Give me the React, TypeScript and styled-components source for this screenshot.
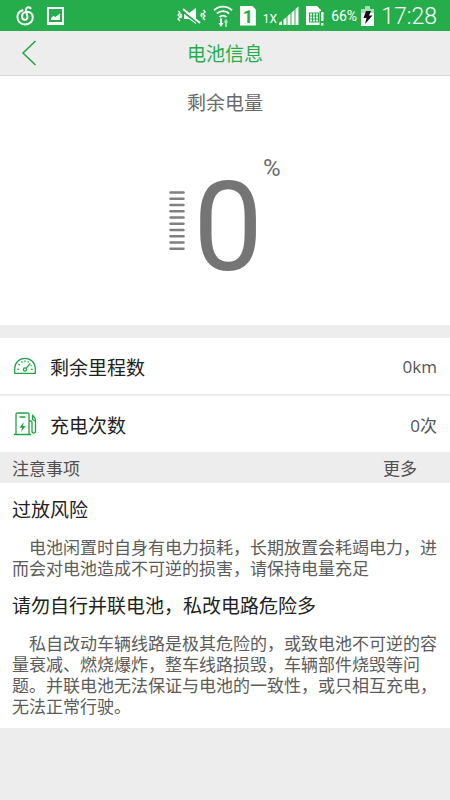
import React from "react";
import styled, { createGlobalStyle } from "styled-components";

const GREEN = "#25ad4b";
const CANVAS = "#ededed";

const GlobalStyle = createGlobalStyle`
  * { box-sizing: border-box; }
  body {
    margin: 0;
    background: ${CANVAS};
    color: #222;
    font-family: Roboto, "Noto Sans CJK SC", sans-serif;
  }
  h1, h2, h3, p, dl, dd { margin: 0; font-weight: 400; }
`;

const Page = styled.div`
  display: flex;
  flex-direction: column;
`;

const StatusBar = styled.div`
  display: flex;
  align-items: center;
  justify-content: space-between;
  height: 31px;
  padding: 0 13px 0 16px;
  background: ${GREEN};
  color: #fff;
`;

const StatusGroup = styled.div<{ $gap: number }>`
  display: flex;
  align-items: center;
  gap: ${(p) => p.$gap}px;
`;

const Icon = styled.svg`
  display: block;
  flex: none;
`;

const SimBadge = styled.span`
  width: 16px;
  height: 20px;
  background: #fff;
  clip-path: polygon(0 0, 75% 0, 100% 20%, 100% 100%, 0 100%);
  color: ${GREEN};
  font-size: 18px;
  font-weight: 700;
  line-height: 21px;
  text-align: center;
`;

const SmallText = styled.span<{ $size: number }>`
  font-size: ${(p) => p.$size}px;
  line-height: ${(p) => (p.$size < 14 ? 12 : 20)}px;
  align-self: ${(p) => (p.$size < 14 ? "flex-end" : "center")};
`;

const Clock = styled.time`
  font-size: 23px;
  font-weight: 300;
  line-height: 31px;
  padding-top: 2px;
`;

const NavBar = styled.header`
  display: grid;
  grid-template-columns: 58px 1fr 58px;
  align-items: center;
  height: 45px;
  border-bottom: 1px solid #d6d6d6;
`;

const BackButton = styled.button`
  display: flex;
  align-items: center;
  height: 44px;
  padding: 0 21px;
  border: 0;
  background: none;
`;

const Title = styled.h1`
  padding-top: 4px;
  color: ${GREEN};
  font-size: 19px;
  line-height: 28px;
  text-align: center;
`;

const ChargePanel = styled.section`
  display: flex;
  flex-direction: column;
  align-items: center;
  gap: 38px;
  padding: 14px 0 40px;
  background: #fff;
  color: #6a6a6a;
`;

const ChargeTitle = styled.h2`
  font-size: 19px;
  line-height: 28px;
`;

const Gauge = styled.div`
  display: flex;
  align-items: center;
  height: 129px;
`;

const Digit = styled.span`
  padding-top: 14px;
  margin-left: 8px;
  color: #757575;
  font-size: 124px;
  line-height: 129px;
`;

const Percent = styled.span`
  align-self: flex-start;
  font-size: 24px;
  line-height: 24px;
`;

const Stats = styled.dl`
  display: grid;
  gap: 2px;
  margin-top: 13px;
`;

const StatRow = styled.div`
  display: flex;
  align-items: center;
  height: 56px;
  padding: 0 13px;
  background: #fff;
`;

const StatLabel = styled.dt`
  display: flex;
  flex: 1;
  align-items: center;
  gap: 13px;
  font-size: 19px;
`;

const StatValue = styled.dd`
  color: #555;
  font-family: "Open Sans", "Noto Sans CJK SC", sans-serif;
  font-size: 17px;
`;

const NoticeHeader = styled.div`
  display: flex;
  align-items: center;
  justify-content: space-between;
  height: 31px;
  padding: 0 33px 0 12px;
  color: #505050;
`;

const NoticeTitle = styled.h2`
  font-size: 17px;
`;

const MoreLink = styled.a`
  color: inherit;
  font-size: 17px;
  text-decoration: none;
`;

const Notices = styled.section`
  display: grid;
  gap: 13px;
  padding: 14px 12px 10px;
  background: #fff;
`;

const Notice = styled.article`
  display: grid;
  gap: 13px;
`;

const NoticeName = styled.h3`
  font-size: 19px;
  line-height: 28px;
`;

const NoticeText = styled.p`
  color: #5c5c5c;
  font-size: 17px;
  line-height: 21px;
  text-indent: 17px;
  white-space: nowrap;
`;

const MusicIcon = () => (
  <Icon width="19" height="20" viewBox="0 0 19 20" fill="none" stroke="#fff" strokeWidth="2" strokeLinecap="round">
    <path d="M6.5 4.2C3.3 5.2 1.4 7.8 1.4 11c0 4.300 3.400 7.600 7.600 7.600s7.800-3 7.800-7.200c0-3.600-2.600-5.700-5.700-5.700-3 0-5.100 1.900-5.100 4.600 0 2.200 1.300 3.500 2.900 3.500s2.900-1.300 2.500-3.100L10 4.200C9.700 2.300 11.300 1 12.800 1.200c.8.100 1.400.5 1.700.9" />
  </Icon>
);

const GalleryIcon = () => (
  <Icon width="17" height="18" viewBox="0 0 17 18">
    <path fill="none" stroke="#fff" strokeWidth="2" d="M1 1h15v16H1z" />
    <path fill="#fff" d="M4 13v-2l2.500-2 2 1L13 6.500V13zM1 15h15v2H1z" />
  </Icon>
);

const MuteIcon = () => (
  <Icon width="29" height="18" viewBox="0 0 29 18">
    <path fill="#fff" d="M7 6h5l7-5v16l-7-5H7z" />
    <path stroke={GREEN} strokeWidth="2" d="M5 4l17 13" />
    <path stroke="#fff" strokeWidth="2" d="M6 2l17 14" />
    <path fill="none" stroke="#fff" strokeWidth="1.300" d="M1.500 4l1.500 2-2 2 2 2-2 2 2 2M26.500 3l1.500 2-2 2 2 2-2 2 2 2M4.500 7l-1 1 1 1-1 1 1 1M24 6l1 1-1 1 1 1-1 1" />
  </Icon>
);

const WifiIcon = () => (
  <Icon width="20" height="22" viewBox="0 0 20 22">
    <g fill="none" stroke="#fff" strokeWidth="1.900">
      <path d="M1 5.200a13 13 0 0 1 18 0M3.800 8.600a9 9 0 0 1 12.400 0M6.600 12a5 5 0 0 1 6.800 0" />
    </g>
    <path fill="#fff" d="M7 13.500h2V18h1.500L8 22l-2.500-4H7z" />
    <path fill="#a5dfb5" d="M12 22h2v-4.500h1.500l-2.500-4-2.500 4H12z" />
  </Icon>
);

const SignalIcon = () => (
  <Icon width="20" height="19" viewBox="0 0 20 19" fill="#fff">
    <path d="M0 19v-2l3-2v4zM4.500 19v-5.500l3-2.500v8zM8.500 19V10l3-2.500V19zM12.500 19V6.500l3-2.500v15zM16.500 19V3l3-2.500V19z" />
  </Icon>
);

const SimAlertIcon = () => (
  <Icon width="18" height="20" viewBox="0 0 18 20">
    <path fill="#fff" d="M0 0h11l4 4v15H0z" />
    <path fill="none" stroke={GREEN} strokeWidth="1.200" d="M3.500 7h9v9h-9zM3.500 10h9M3.500 13h9M6.500 7v9M9.500 7v9" />
    <path fill={GREEN} d="M13.500 5H18v15h-4.500z" />
    <path fill="#fff" d="M15 6h2.500v9H15zM15 17h2.500v2.500H15z" />
  </Icon>
);

const BatteryIcon = () => (
  <Icon width="13" height="20" viewBox="0 0 13 20">
    <path fill="#a5dfb5" d="M4 0h5v3h4v5H0V3h4z" />
    <path fill="#fff" d="M0 7h13v13H0z" />
    <path fill="#111" d="M5 5h5L8 9.500h3.500L4 18l1.500-6H2.500z" />
  </Icon>
);

const BackIcon = () => (
  <Icon width="16" height="26" viewBox="0 0 16 26" fill="none" stroke="#22a33f" strokeWidth="1.500">
    <path d="M14.500 1L2 13l12.500 12" />
  </Icon>
);

const LevelBars = () => (
  <Icon width="16" height="60" viewBox="0 0 16 60" stroke="#808080" strokeWidth="2.500" strokeLinecap="round">
    {Array.from({ length: 10 }, (_, i) => (
      <path key={i} d={`M1.500 ${1.5 + i * 6.25}h13`} />
    ))}
  </Icon>
);

const MileageIcon = () => (
  <Icon width="24" height="24" viewBox="0 0 24 24" fill="none" stroke="#20a545" strokeWidth="1.300">
    <path d="M1.700 19.300v-4.600C1.700 8.700 6.300 4.300 12 4.300s10.300 4.400 10.300 10.400v4.600z" strokeLinejoin="round" />
    <circle cx="12" cy="15.500" r="1.600" />
    <path d="M13.200 14.200l4-4.700M4.300 15.300h2M17.800 15.300h2M5.500 10.300l1.500 1M8.500 7.300l.8 1.500M12 6.500v1.800M15.500 7.300l-.6 1.300M18.600 11.300l-.9.400" />
  </Icon>
);

const ChargeIcon = () => (
  <Icon width="24" height="24" viewBox="0 0 24 24" fill="none" stroke="#20a545" strokeWidth="1.300">
    <path d="M3 22V2.500C3 1.500 3.500 1 4.500 1h10c1 0 1.500.5 1.500 1.500V22M1 22.500h17M6.500 5h6M16 9h1.500c1 0 1.500.5 1.500 1.500V19c0 2.700 3.500 2.700 3.500 0V8.500c0-1.200-.3-2-.9-2.800L19 2.800M19.500 4v3.500l3 1.500" />
    <path fill="#20a545" stroke="none" d="M10.800 10L6.500 15.800h2.700L8 20l4.700-6H9.900z" />
  </Icon>
);

export default function App() {
  return (
    <Page>
      <GlobalStyle />
      <StatusBar>
        <StatusGroup $gap={12}>
          <MusicIcon />
          <GalleryIcon />
        </StatusGroup>
        <StatusGroup $gap={7}>
          <MuteIcon />
          <WifiIcon />
          <SimBadge>1</SimBadge>
          <StatusGroup $gap={2}>
            <SmallText $size={12}>1X</SmallText>
            <SignalIcon />
          </StatusGroup>
          <SimAlertIcon />
          <StatusGroup $gap={4}>
            <SmallText $size={14}>66%</SmallText>
            <BatteryIcon />
          </StatusGroup>
          <Clock>17:28</Clock>
        </StatusGroup>
      </StatusBar>

      <NavBar>
        <BackButton type="button" aria-label="返回">
          <BackIcon />
        </BackButton>
        <Title>电池信息</Title>
      </NavBar>

      <main>
        <ChargePanel>
          <ChargeTitle>剩余电量</ChargeTitle>
          <Gauge>
            <LevelBars />
            <Digit>0</Digit>
            <Percent>%</Percent>
          </Gauge>
        </ChargePanel>

        <Stats>
          <StatRow>
            <StatLabel>
              <MileageIcon />
              剩余里程数
            </StatLabel>
            <StatValue>0km</StatValue>
          </StatRow>
          <StatRow>
            <StatLabel>
              <ChargeIcon />
              充电次数
            </StatLabel>
            <StatValue>0次</StatValue>
          </StatRow>
        </Stats>

        <NoticeHeader>
          <NoticeTitle>注意事项</NoticeTitle>
          <MoreLink href="#more">更多</MoreLink>
        </NoticeHeader>

        <Notices>
          <Notice>
            <NoticeName>过放风险</NoticeName>
            <NoticeText>
              电池闲置时自身有电力损耗，长期放置会耗竭电力，进
              <br />
              而会对电池造成不可逆的损害，请保持电量充足
            </NoticeText>
          </Notice>
          <Notice>
            <NoticeName>请勿自行并联电池，私改电路危险多</NoticeName>
            <NoticeText>
              私自改动车辆线路是极其危险的，或致电池不可逆的容
              <br />
              量衰减、燃烧爆炸，整车线路损毁，车辆部件烧毁等问
              <br />
              题。并联电池无法保证与电池的一致性，或只相互充电，
              <br />
              无法正常行驶。
            </NoticeText>
          </Notice>
        </Notices>
      </main>
    </Page>
  );
}
